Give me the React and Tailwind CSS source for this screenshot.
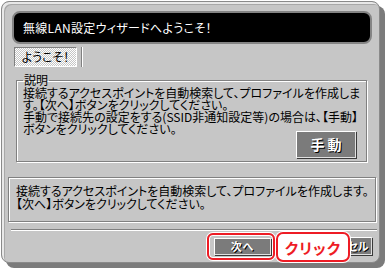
const JP = "font-['Noto_Sans_CJK_JP','Liberation_Sans',sans-serif] [font-feature-settings:'palt']";

function GrayButton({ label, className = '' }) {
  return (
    <div
      className={`flex items-center justify-center bg-[#7b7b7b] border border-t-white border-l-white border-b-[#e0e0e0] border-r-[#e0e0e0] shadow-[1px_1px_0_#3a3a3a] text-white font-bold [text-shadow:1px_1px_0_#000] ${className}`}
    >
      {label}
    </div>
  );
}

export default function App() {
  return (
    <div className={`w-[386px] h-[270px] bg-white overflow-hidden ${JP} text-black`}>
      {/* Window frame */}
      <div className="ml-[1px] mt-[1px] w-[379px] h-[262px] bg-[#c6c6c6] border border-[#8a8a8a] rounded-[8px] shadow-[inset_2px_2px_0_#e8e8e8,inset_3px_3px_0_#a8a8a8,5px_5px_0_#7b7b7b] flex flex-col">
        {/* Title bar */}
        <div className="ml-[10px] mt-[9px] w-[360px] h-[33px] bg-black border-2 border-[#848484] rounded-[8px] flex items-center pl-[9px]">
          <span className="text-white text-[12px] leading-none tracking-[0.3px]">無線LAN設定ウィザードへようこそ！</span>
        </div>

        {/* Tab row */}
        <div className="ml-[12px] mt-[3px] flex items-stretch h-[20px] gap-[4px]">
          <div className="w-[63px] flex items-center justify-center text-[12px] leading-none border border-t-[#808080] border-l-[#808080] border-b-white border-r-white bg-[conic-gradient(#fff_25%,#c6c6c6_0_50%,#fff_0_75%,#c6c6c6_0)] bg-[length:2px_2px]">
            ようこそ！
          </div>
          <div className="w-[2px] border-l border-l-[#808080] border-r border-r-white" />
        </div>

        {/* Description group */}
        <fieldset className="ml-[14px] mt-[7px] w-[351px] h-[88px] border border-[#808080] shadow-[inset_1px_1px_0_#fff,1px_1px_0_#fff] px-[6px] flex flex-col">
          <legend className="px-[1px] text-[12px] leading-[12px]">説明</legend>
          <p className="mt-[1px] text-[12px] leading-[12px] whitespace-nowrap">
            接続するアクセスポイントを自動検索して、プロファイルを作成しま
            <br />
            す。【次へ】ボタンをクリックしてください。
            <br />
            手動で接続先の設定をする(SSID非通知設定等)の場合は、【手動】
            <br />
            ボタンをクリックしてください。
          </p>
          <div className="flex justify-end -mt-[4px] pr-[4px]">
            <GrayButton label="手動" className="w-[60px] h-[27px] text-[14px] tracking-[3px] pl-[3px]" />
          </div>
        </fieldset>

        {/* Status box */}
        <div className="ml-[6px] mt-[15px] w-[368px] h-[45px] border border-[#808080] shadow-[inset_1px_1px_0_#fff,1px_1px_0_#fff] pl-[7px] pt-[6px] text-[12px] leading-[13px] whitespace-nowrap">
          接続するアクセスポイントを自動検索して、プロファイルを作成します。
          <br />
          【次へ】ボタンをクリックしてください。
        </div>

        {/* Separator */}
        <div className="ml-[9px] mt-[7px] w-[366px] h-[2px] border-t border-t-[#808080] border-b border-b-white" />

        {/* Buttons */}
        <div className="relative mt-[1px] h-[30px] flex items-start pr-[7px]">
          <div className="ml-[205px] mt-[1px] w-[68px] h-[27px] border-2 border-[#ee1c25] rounded-[6px] shadow-[0_0_0_1px_#fff,inset_0_0_0_1px_#fff] pl-[5px] pt-[3px]">
            <GrayButton label="次へ" className="w-[57px] h-[17px] text-[11px] tracking-[1px]" />
          </div>
          <GrayButton label="キャンセル" className="ml-auto mt-[5px] w-[58px] h-[18px] text-[11px]" />

          {/* Callout */}
          <div className="absolute left-[274px] top-0 w-[74px] h-[30px] bg-white border-2 border-[#ee1c25] rounded-[7px] shadow-[0_0_0_1px_#fff] flex items-center justify-center text-[#ee1c25] font-bold text-[15px] leading-none tracking-[1px]">
            クリック
          </div>
        </div>
      </div>
    </div>
  );
}
